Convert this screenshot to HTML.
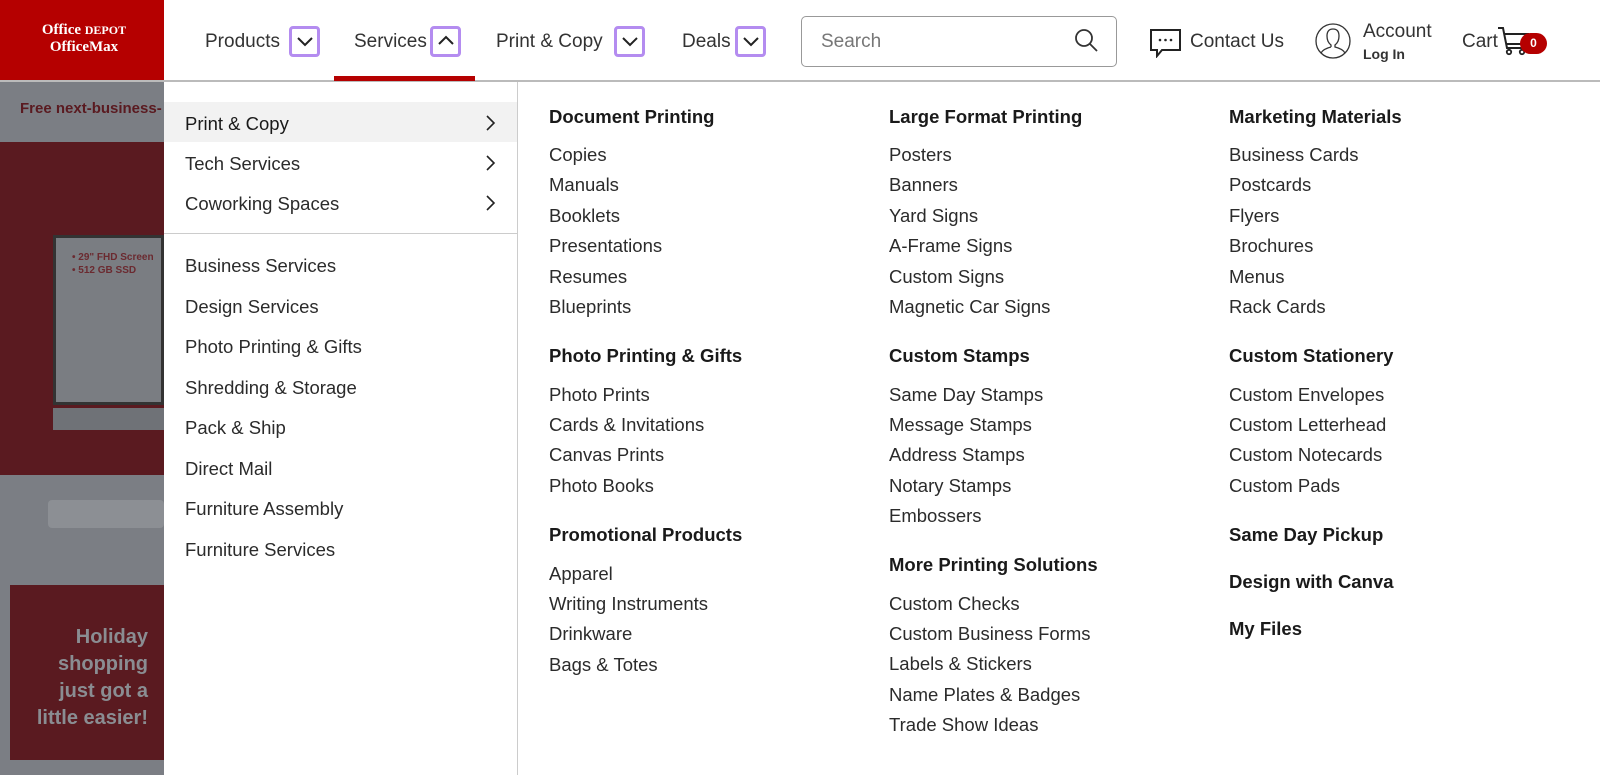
<!DOCTYPE html>
<html><head><meta charset="utf-8"><style>
*{margin:0;padding:0;box-sizing:border-box}
body{width:1600px;height:775px;overflow:hidden;background:#fff;font-family:"Segoe UI","Liberation Sans","DejaVu Sans",sans-serif;color:#222;position:relative}
.a{position:absolute;white-space:nowrap}
.t{font-size:18.5px;line-height:24px;color:#2b2b2b}
.h{font-size:18.5px;line-height:24px;font-weight:bold;color:#1a1a1a}
.box{position:absolute;width:31px;height:31px;border:3px solid #b48cf0;border-radius:4px;top:26px}
.nav{font-size:19px;line-height:24px;color:#333;top:30px}
</style></head><body>
<div class="a" style="left:0;top:0;width:164px;height:82px;background:#b50000"></div>
<div class="a" style="left:20px;top:22px;color:#fff;font-family:'Liberation Serif',serif;font-weight:bold;font-size:15px;line-height:17px;text-align:center;width:128px">Office <span style="font-size:12px">DEPOT</span><br>OfficeMax</div>
<div class="a" style="left:0;top:80px;width:1600px;height:2px;background:#bbb"></div>
<div class="a nav" style="left:205px">Products</div>
<div class="box" style="left:289px"></div>
<svg class="a" style="left:295px;top:34px" width="20" height="16"><path d="M3 4 L10 11 L17 4" fill="none" stroke="#222" stroke-width="2"/></svg>
<div class="a nav" style="left:354px">Services</div>
<div class="box" style="left:430px"></div>
<svg class="a" style="left:436px;top:32px" width="20" height="16"><path d="M3 12 L10 5 L17 12" fill="none" stroke="#222" stroke-width="2"/></svg>
<div class="a" style="left:334px;top:76px;width:141px;height:5px;background:#b50000"></div>
<div class="a nav" style="left:496px">Print &amp; Copy</div>
<div class="box" style="left:614px"></div>
<svg class="a" style="left:620px;top:34px" width="20" height="16"><path d="M3 4 L10 11 L17 4" fill="none" stroke="#222" stroke-width="2"/></svg>
<div class="a nav" style="left:682px">Deals</div>
<div class="box" style="left:735px"></div>
<svg class="a" style="left:741px;top:34px" width="20" height="16"><path d="M3 4 L10 11 L17 4" fill="none" stroke="#222" stroke-width="2"/></svg>
<div class="a" style="left:801px;top:16px;width:316px;height:51px;border:1px solid #999;border-radius:5px"></div>
<div class="a" style="left:821px;top:30px;font-size:19px;line-height:24px;color:#777">Search</div>
<svg class="a" style="left:1074px;top:28px" width="26" height="26"><circle cx="10" cy="10" r="8" fill="none" stroke="#333" stroke-width="1.8"/><path d="M16 16 L23 23" stroke="#333" stroke-width="1.8"/></svg>
<svg class="a" style="left:1149px;top:28px" width="34" height="30"><path d="M2 2 H31 V22 H13 L8 28 V22 H2 Z" fill="none" stroke="#222" stroke-width="2"/><circle cx="11" cy="12" r="1.3" fill="#222"/><circle cx="16.5" cy="12" r="1.3" fill="#222"/><circle cx="22" cy="12" r="1.3" fill="#222"/></svg>
<div class="a" style="left:1190px;top:30px;font-size:19px;line-height:24px;color:#333">Contact Us</div>
<svg class="a" style="left:1314px;top:22px" width="38" height="38"><circle cx="19" cy="19" r="17" fill="none" stroke="#333" stroke-width="1.3"/><path d="M13 14 Q13 7 19 7 Q25 7 25 14 Q25 20 21 23 L21 25 Q29 27 31 31 M17 25 L17 23 Q13 20 13 14 M17 25 Q9 27 7 31" fill="none" stroke="#333" stroke-width="1.3"/></svg>
<div class="a" style="left:1363px;top:20px;font-size:19px;line-height:24px;color:#333">Account</div>
<div class="a" style="left:1363px;top:45px;font-size:14px;line-height:18px;font-weight:bold;color:#333">Log In</div>
<div class="a" style="left:1462px;top:30px;font-size:19px;line-height:24px;color:#333">Cart</div>
<svg class="a" style="left:1496px;top:26px" width="36" height="30"><path d="M2 2 H7 L11 22 H28 M9 8 H32 L29 18 H11" fill="none" stroke="#222" stroke-width="2"/><circle cx="13" cy="26" r="2.2" fill="none" stroke="#222" stroke-width="1.8"/><circle cx="26" cy="26" r="2.2" fill="none" stroke="#222" stroke-width="1.8"/></svg>
<div class="a" style="left:1520px;top:33px;width:27px;height:21px;border-radius:11px;background:#b50000;color:#fff;font-size:12px;font-weight:bold;line-height:21px;text-align:center">0</div>
<div class="a" style="left:0;top:82px;width:164px;height:693px;background:#7b7e84"></div>
<div class="a" style="left:20px;top:100px;font-size:15px;font-weight:bold;color:#5a1a20">Free next-business-</div>
<div class="a" style="left:0;top:142px;width:164px;height:333px;background:#5a1a20"></div>
<div class="a" style="left:53px;top:235px;width:111px;height:170px;background:#7a7d82;border:3px solid #333"></div>
<div class="a" style="left:72px;top:251px;font-size:10px;line-height:13px;font-weight:bold;color:#6b2a30">• 29" FHD Screen<br>• 512 GB SSD</div>
<div class="a" style="left:53px;top:408px;width:111px;height:22px;background:#6f7277"></div>
<div class="a" style="left:48px;top:500px;width:116px;height:28px;background:#8c8f94;border-radius:4px"></div>
<div class="a" style="left:10px;top:585px;width:154px;height:175px;background:#5a1a20"></div>
<div class="a" style="left:10px;top:624px;width:138px;text-align:right;font-size:20px;line-height:27px;font-weight:bold;color:#8a8d92">Holiday<br>shopping<br>just got a<br>little easier!</div>
<div class="a" style="left:517px;top:82px;width:1px;height:693px;background:#ccc"></div>
<div class="a" style="left:164px;top:102px;width:353px;height:40px;background:#f2f2f2"></div>
<div class="a" style="left:164px;top:233px;width:353px;height:1px;background:#ccc"></div>
<div class="a t" style="left:185px;top:112px;color:#1a1a1a">Print &amp; Copy</div>
<div class="a t" style="left:185px;top:152px">Tech Services</div>
<div class="a t" style="left:185px;top:192px">Coworking Spaces</div>
<svg class="a" style="left:485px;top:114px" width="12" height="100"><path d="M2 2 L9 9 L2 16 M2 42 L9 49 L2 56 M2 82 L9 89 L2 96" fill="none" stroke="#222" stroke-width="1.6"/></svg>
<div class="a t" style="left:185px;top:246px;line-height:40.5px">Business Services<br>Design Services<br>Photo Printing &amp; Gifts<br>Shredding &amp; Storage<br>Pack &amp; Ship<br>Direct Mail<br>Furniture Assembly<br>Furniture Services</div>
<div class="a h" style="left:549px;top:105px">Document Printing</div>
<div class="a t" style="left:549px;top:140px;line-height:30.4px">Copies<br>Manuals<br>Booklets<br>Presentations<br>Resumes<br>Blueprints</div>
<div class="a h" style="left:549px;top:344px">Photo Printing &amp; Gifts</div>
<div class="a t" style="left:549px;top:380px;line-height:30.2px">Photo Prints<br>Cards &amp; Invitations<br>Canvas Prints<br>Photo Books</div>
<div class="a h" style="left:549px;top:523px">Promotional Products</div>
<div class="a t" style="left:549px;top:559px;line-height:30.2px">Apparel<br>Writing Instruments<br>Drinkware<br>Bags &amp; Totes</div>
<div class="a h" style="left:889px;top:105px">Large Format Printing</div>
<div class="a t" style="left:889px;top:140px;line-height:30.4px">Posters<br>Banners<br>Yard Signs<br>A-Frame Signs<br>Custom Signs<br>Magnetic Car Signs</div>
<div class="a h" style="left:889px;top:344px">Custom Stamps</div>
<div class="a t" style="left:889px;top:380px;line-height:30.2px">Same Day Stamps<br>Message Stamps<br>Address Stamps<br>Notary Stamps<br>Embossers</div>
<div class="a h" style="left:889px;top:553px">More Printing Solutions</div>
<div class="a t" style="left:889px;top:589px;line-height:30.2px">Custom Checks<br>Custom Business Forms<br>Labels &amp; Stickers<br>Name Plates &amp; Badges<br>Trade Show Ideas</div>
<div class="a h" style="left:1229px;top:105px">Marketing Materials</div>
<div class="a t" style="left:1229px;top:140px;line-height:30.4px">Business Cards<br>Postcards<br>Flyers<br>Brochures<br>Menus<br>Rack Cards</div>
<div class="a h" style="left:1229px;top:344px">Custom Stationery</div>
<div class="a t" style="left:1229px;top:380px;line-height:30.2px">Custom Envelopes<br>Custom Letterhead<br>Custom Notecards<br>Custom Pads</div>
<div class="a h" style="left:1229px;top:523px">Same Day Pickup</div>
<div class="a h" style="left:1229px;top:570px">Design with Canva</div>
<div class="a h" style="left:1229px;top:617px">My Files</div>
</body></html>
